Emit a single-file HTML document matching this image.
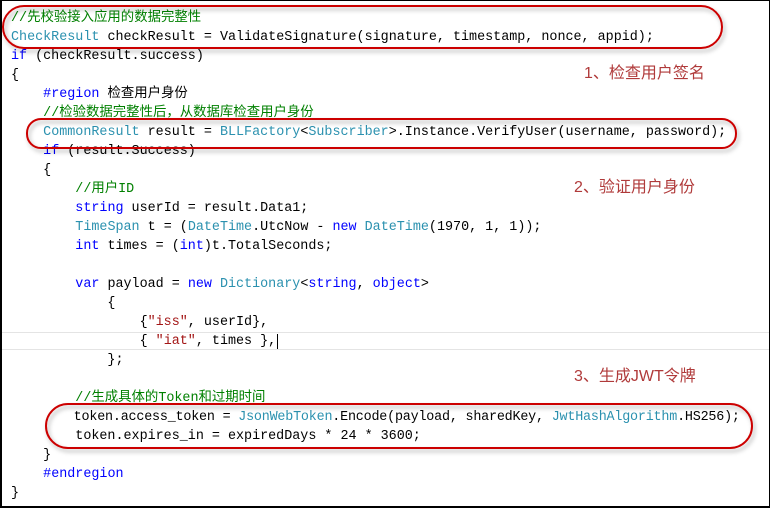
<!DOCTYPE html>
<html><head><meta charset="utf-8"><style>
html,body{margin:0;padding:0;background:#fff}
#w{position:relative;width:770px;height:508px;overflow:hidden;box-sizing:border-box;border:1px solid #000;border-left-width:2px;border-bottom-width:2px;background:#fff}
.l{position:absolute;left:9px;height:19px;line-height:19px;font-family:"Liberation Mono","Noto Sans CJK SC",monospace;font-size:13.4px;color:#000;white-space:pre}
.c{color:#008000}.k{color:#0000ff}.t{color:#2b91af}.s{color:#a31515}
.lab{position:absolute;font-family:"Liberation Sans","Noto Sans CJK SC",sans-serif;font-size:16px;color:#b03a3a;white-space:pre}
.hl{position:absolute;left:0;width:770px;height:1px;background:#e4e4e4}
</style></head><body><div id="w">
<div class="hl" style="top:331px"></div><div class="hl" style="top:348px"></div>
<div class="l" style="top:8px"><span class="c">//先校验接入应用的数据完整性</span></div>
<div class="l" style="top:27px"><span class="t">CheckResult</span> checkResult = ValidateSignature(signature, timestamp, nonce, appid);</div>
<div class="l" style="top:46px"><span class="k">if</span> (checkResult.success)</div>
<div class="l" style="top:65px">{</div>
<div class="l" style="top:84px">    <span class="k">#region</span> 检查用户身份</div>
<div class="l" style="top:103px">    <span class="c">//检验数据完整性后，从数据库检查用户身份</span></div>
<div class="l" style="top:122px">    <span class="t">CommonResult</span> result = <span class="t">BLLFactory</span>&lt;<span class="t">Subscriber</span>&gt;.Instance.VerifyUser(username, password);</div>
<div class="l" style="top:141px">    <span class="k">if</span> (result.Success)</div>
<div class="l" style="top:160px">    {</div>
<div class="l" style="top:179px">        <span class="c">//用户ID</span></div>
<div class="l" style="top:198px">        <span class="k">string</span> userId = result.Data1;</div>
<div class="l" style="top:217px">        <span class="t">TimeSpan</span> t = (<span class="t">DateTime</span>.UtcNow - <span class="k">new</span> <span class="t">DateTime</span>(1970, 1, 1));</div>
<div class="l" style="top:236px">        <span class="k">int</span> times = (<span class="k">int</span>)t.TotalSeconds;</div>
<div class="l" style="top:274px">        <span class="k">var</span> payload = <span class="k">new</span> <span class="t">Dictionary</span>&lt;<span class="k">string</span>, <span class="k">object</span>&gt;</div>
<div class="l" style="top:293px">            {</div>
<div class="l" style="top:312px">                {<span class="s">"iss"</span>, userId},</div>
<div class="l" style="top:331px">                { <span class="s">"iat"</span>, times },<span style="border-left:1px solid #000;margin-left:1px"></span></div>
<div class="l" style="top:350px">            };</div>
<div class="l" style="top:388px">        <span class="c">//生成具体的Token和过期时间</span></div>
<div class="l" style="top:407px;letter-spacing:-0.2px">        token.access_token = <span class="t">JsonWebToken</span>.Encode(payload, sharedKey, <span class="t">JwtHashAlgorithm</span>.HS256);</div>
<div class="l" style="top:426px">        token.expires_in = expiredDays * 24 * 3600;</div>
<div class="l" style="top:445px">    }</div>
<div class="l" style="top:464px">    <span class="k">#endregion</span></div>
<div class="l" style="top:483px">}</div>
<div class="lab" style="left:582px;top:58px">1、检查用户签名</div>
<div class="lab" style="left:572px;top:172px">2、验证用户身份</div>
<div class="lab" style="left:572px;top:361px">3、生成JWT令牌</div>
<svg width="770" height="508" style="position:absolute;left:-2px;top:-1px">
<defs><filter id="sh" x="-5%" y="-50%" width="110%" height="200%"><feDropShadow dx="2" dy="3" stdDeviation="2" flood-color="#000" flood-opacity="0.3"/></filter></defs>
<g fill="none" stroke="#c00" stroke-width="2" filter="url(#sh)">
<rect x="3" y="6" width="719" height="42" rx="21"/>
<rect x="27" y="119" width="709" height="29" rx="14"/>
<rect x="46" y="404" width="706" height="44" rx="22"/>
</g></svg>
</div></body></html>
